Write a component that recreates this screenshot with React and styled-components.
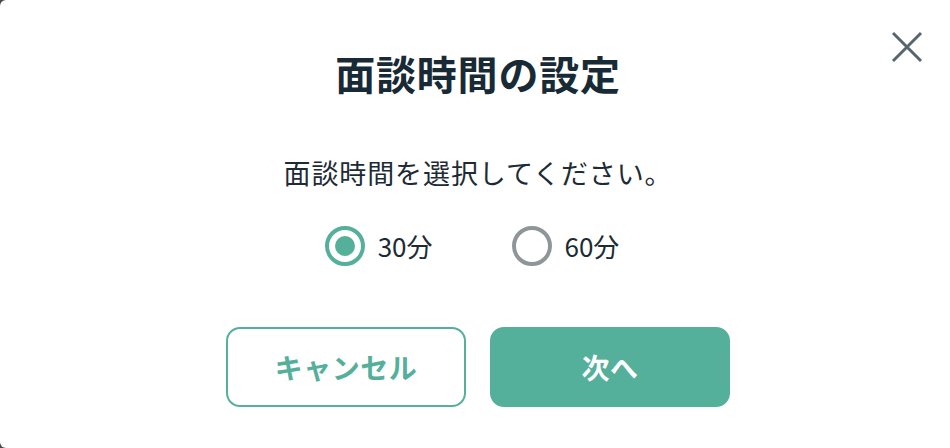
import React, { useState } from "react";
import styled, { createGlobalStyle } from "styled-components";

const GlobalStyle = createGlobalStyle`
  html, body {
    margin: 0;
    padding: 0;
    background: #4a4a4a;
    overflow: hidden;
  }
  body {
    font-family: "Noto Sans CJK JP", "Noto Sans", sans-serif;
  }
`;

const GREEN = "#55b09b";

const Modal = styled.div`
  position: relative;
  width: 950px;
  height: 448px;
  box-sizing: border-box;
  background: #ffffff;
  border-radius: 6px 0 0 6px;
  display: flex;
  flex-direction: column;
  align-items: center;
  padding: 49px 0 0 6px;
`;

const CloseButton = styled.button`
  position: absolute;
  top: 31px;
  right: 27px;
  width: 32px;
  height: 32px;
  padding: 0;
  border: none;
  background: transparent;
  cursor: pointer;
  display: flex;
  align-items: center;
  justify-content: center;
`;

const Title = styled.h2`
  margin: 0;
  font-size: 40px;
  line-height: 48px;
  font-weight: 700;
  color: #182a36;
  letter-spacing: 0.8px;
`;

const Lead = styled.p`
  margin: 58px 0 0;
  font-size: 27px;
  line-height: 36px;
  font-weight: 400;
  color: #1d2b35;
  letter-spacing: 0.9px;
`;

const RadioGroup = styled.div`
  display: flex;
  align-items: center;
  gap: 79px;
  margin-top: 35px;
  margin-left: -12px;
`;

const RadioLabel = styled.label`
  display: flex;
  align-items: center;
  gap: 13px;
  cursor: pointer;
  font-size: 26px;
  line-height: 40px;
  color: #1d2b35;
`;

const RadioCircle = styled.span`
  width: 40px;
  height: 40px;
  box-sizing: border-box;
  border-radius: 50%;
  border: 4.5px solid ${(p) => (p.$checked ? GREEN : "#8f969a")};
  display: flex;
  align-items: center;
  justify-content: center;

  &::after {
    content: "";
    width: 20px;
    height: 20px;
    border-radius: 50%;
    background: ${GREEN};
    display: ${(p) => (p.$checked ? "block" : "none")};
  }
`;

const ButtonRow = styled.div`
  display: flex;
  gap: 24px;
  margin-top: 61px;
`;

const Button = styled.button`
  width: 240px;
  height: 80px;
  box-sizing: border-box;
  border-radius: 14px;
  border: 2px solid ${GREEN};
  background: ${(p) => (p.$primary ? GREEN : "#ffffff")};
  color: ${(p) => (p.$primary ? "#ffffff" : GREEN)};
  font-family: "Noto Sans CJK JP", "Noto Sans", sans-serif;
  font-size: 28px;
  font-weight: 700;
  letter-spacing: 0.5px;
  cursor: pointer;
`;

const options = [
  { value: 30, label: "30分" },
  { value: 60, label: "60分" },
];

const App = () => {
  const [duration, setDuration] = useState(30);

  return (
    <>
      <GlobalStyle />
      <Modal>
        <CloseButton aria-label="閉じる">
          <svg width="32" height="32" viewBox="0 0 32 32">
            <path
              d="M2 2 L30 30 M30 2 L2 30"
              stroke="#56656e"
              strokeWidth="3"
              fill="none"
            />
          </svg>
        </CloseButton>
        <Title>面談時間の設定</Title>
        <Lead>面談時間を選択してください。</Lead>
        <RadioGroup>
          {options.map((o) => (
            <RadioLabel key={o.value} onClick={() => setDuration(o.value)}>
              <RadioCircle $checked={duration === o.value} />
              {o.label}
            </RadioLabel>
          ))}
        </RadioGroup>
        <ButtonRow>
          <Button>キャンセル</Button>
          <Button $primary>次へ</Button>
        </ButtonRow>
      </Modal>
    </>
  );
};

export default App;
